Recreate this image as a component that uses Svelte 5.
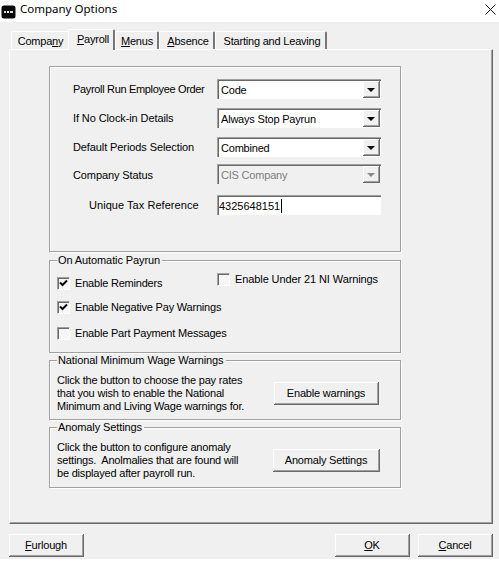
<script>
  const tabs = [
    { pre: 'Compa', key: 'n', post: 'y', w: 58, cls: 'first' },
    { pre: '', key: 'P', post: 'ayroll', w: 47, cls: 'active' },
    { pre: '', key: 'M', post: 'enus', w: 44, cls: 'menus' },
    { pre: '', key: 'A', post: 'bsence', w: 56, cls: 'absence' },
    { pre: 'Starting and Leaving', key: '', post: '', w: 112, cls: 'starting' }
  ];
  const combos = [
    { label: 'Payroll Run Employee Order', value: 'Code', cls: 'r1' },
    { label: 'If No Clock-in Details', value: 'Always Stop Payrun', cls: 'r2' },
    { label: 'Default Periods Selection', value: 'Combined', cls: 'r2' },
    { label: 'Company Status', value: 'CIS Company', cls: 'r3', disabled: true }
  ];
</script>

<div class="window">
  <header class="titlebar">
    <svg class="appicon" width="15" height="15" viewBox="0 0 15 15">
      <rect x="0.5" y="1.5" width="14" height="13" rx="2.5" fill="#0a0a0a" />
      <rect x="3" y="7" width="2" height="2" fill="#ddd" />
      <rect x="6" y="7" width="2" height="2" fill="#eee" />
      <rect x="9" y="7" width="3" height="2" fill="#ddd" />
    </svg>
    <span class="title">Company Options</span>
    <svg class="close" width="11" height="11" viewBox="0 0 11 11">
      <path d="M0.5 0.5 10.5 10.5M10.5 0.5 0.5 10.5" stroke="#111" stroke-width="1" fill="none" />
    </svg>
  </header>

  <main class="dialog">
    <nav class="tabs">
      {#each tabs as t}
        <div class="tab {t.cls}" style="width:{t.w}px">
          <span>{t.pre}{#if t.key}<u>{t.key}</u>{/if}{t.post}</span>
        </div>
      {/each}
    </nav>

    <section class="pane">
      <div class="group general">
        {#each combos as c}
          <div class="row {c.cls}">
            <span class="label">{c.label}</span>
            <div class="combo" class:disabled={c.disabled}>
              <span class="value">{c.value}</span>
              <span class="arrow"><i></i></span>
            </div>
          </div>
        {/each}
        <div class="row r4">
          <span class="label indented">Unique Tax Reference</span>
          <div class="combo text">
            <span class="value">4325648151<b class="caret"></b></span>
          </div>
        </div>
      </div>

      <div class="group payrun">
        <span class="legend">On Automatic Payrun</span>
        <div class="col">
          <label class="check c1"><span class="box on"><svg width="9" height="9" viewBox="0 0 9 9"><path d="M1 3.5 3.5 6 8 1.5" stroke="#000" stroke-width="2" fill="none" /></svg></span>Enable Reminders</label>
          <label class="check c2"><span class="box on"><svg width="9" height="9" viewBox="0 0 9 9"><path d="M1 3.5 3.5 6 8 1.5" stroke="#000" stroke-width="2" fill="none" /></svg></span>Enable Negative Pay Warnings</label>
          <label class="check c3"><span class="box"></span>Enable Part Payment Messages</label>
        </div>
        <div class="col">
          <label class="check c4"><span class="box"></span>Enable Under 21 NI Warnings</label>
        </div>
      </div>

      <div class="group info wage">
        <span class="legend">National Minimum Wage Warnings</span>
        <p>Click the button to choose the pay rates<br />that you wish to enable the National<br />Minimum and Living Wage warnings for.</p>
        <button class="btn enable">Enable warnings</button>
      </div>

      <div class="group info anomaly">
        <span class="legend">Anomaly Settings</span>
        <p>Click the button to configure anomaly<br />settings.&nbsp; Anolmalies that are found will<br />be displayed after payroll run.</p>
        <button class="btn settings">Anomaly Settings</button>
      </div>
    </section>

    <footer class="footer">
      <button class="btn foot"><u>F</u>urlough</button>
      <div class="right">
        <button class="btn foot"><u>O</u>K</button>
        <button class="btn foot"><u>C</u>ancel</button>
      </div>
    </footer>
  </main>
</div>

<style>
  :global(body) { margin: 0; background: #fff; }
  .window {
    width: 499px;
    height: 571px;
    overflow: hidden;
    background: #fff;
    font: 11px/13px "Liberation Sans", Arial, sans-serif;
    letter-spacing: -0.2px;
    color: #000;
  }
  .titlebar {
    height: 22px;
    display: flex;
    align-items: center;
    position: relative;
    padding-left: 1px;
    box-sizing: border-box;
    letter-spacing: 0;
  }
  .appicon { flex: none; margin-top: 1px; }
  .title {
    margin-left: 4px;
    font: 11.5px "Noto Sans", sans-serif;
    color: #000;
    position: relative;
    top: -3px;
  }
  .close { position: absolute; left: 485px; top: 4px; }
  .dialog {
    height: 537px;
    background: #f0f0f0;
    padding: 7px 6px 0 9px;
    box-sizing: border-box;
  }
  .tabs { display: flex; height: 20px; padding-left: 2px; align-items: flex-end; }
  .tab {
    height: 18px;
    box-sizing: border-box;
    display: flex;
    align-items: center;
    justify-content: center;
    border-top: 1px solid #fff;
    border-left: 1px solid #fff;
    border-right: 2px solid #777;
    border-radius: 2px 2px 0 0;
    padding-top: 2px;
    flex: none;
    white-space: nowrap;
  }
  .tab.first { border-right: 0; }
  .tab.active {
    height: 21px;
    margin-left: -1px;
    margin-bottom: -1px;
    position: relative;
    z-index: 1;
    background: #f0f0f0;
    padding: 0 0 1px 4px;
  }
  .tab.menus { padding-left: 1px; }
  .tab.absence, .tab.starting { padding-left: 3px; }
  .pane {
    height: 475px;
    box-sizing: border-box;
    border-top: 1px solid #fff;
    border-left: 1px solid #fff;
    border-right: 1px solid #696969;
    border-bottom: 1px solid #696969;
    box-shadow: inset -1px -1px 0 #a0a0a0;
    padding: 16px 0 0 39px;
  }
  .group {
    width: 352px;
    box-sizing: border-box;
    border: 1px solid #a0a0a0;
    box-shadow: inset 1px 1px 0 #fff, 1px 1px 0 #fff;
    position: relative;
  }
  .general { height: 186px; padding-top: 12px; }
  .payrun { height: 93px; margin-top: 8px; display: flex; padding-left: 7px; }
  .info { height: 60px; margin-top: 7px; display: flex; padding-left: 7px; }
  .anomaly { height: 61px; margin-top: 7px; }
  .legend {
    position: absolute;
    left: 7px;
    top: -7px;
    background: #f0f0f0;
    padding: 0 2px 0 1px;
    white-space: nowrap;
    letter-spacing: -0.1px;
  }
  .row { display: flex; align-items: center; height: 20px; }
  .r2 { margin-top: 9px; }
  .r3 { margin-top: 7px; }
  .r3 .label { padding-top: 3px; }
  .r4 { margin-top: 11px; }
  .label { width: 144px; padding-left: 23px; flex: none; white-space: nowrap; letter-spacing: -0.1px; }
  .r1 .label { letter-spacing: -0.33px; }
  .label.indented { padding-left: 39px; width: 128px; letter-spacing: 0.05px; }
  .combo {
    width: 164px;
    height: 20px;
    box-sizing: border-box;
    flex: none;
    background: #fff;
    border-top: 1px solid #a0a0a0;
    border-left: 1px solid #a0a0a0;
    box-shadow: inset 1px 1px 0 #696969;
    display: flex;
    align-items: center;
    padding-left: 3px;
    position: relative;
  }
  .value { flex: 1; white-space: nowrap; padding-top: 1px; }
  .combo.disabled { background: #f0f0f0; color: #7d7d7d; }
  .combo.text { padding-left: 1px; letter-spacing: 0; }
  .caret {
    display: inline-block;
    width: 1px;
    height: 14px;
    background: #000;
    vertical-align: -3px;
    margin-left: 1px;
  }
  .arrow {
    width: 17px;
    height: 17px;
    box-sizing: border-box;
    flex: none;
    margin-right: 1px;
    background: #f0f0f0;
    border-right: 1px solid #696969;
    border-bottom: 1px solid #696969;
    box-shadow: inset 1px 1px 0 #fff, inset -1px -1px 0 #a0a0a0;
    display: flex;
    align-items: center;
    justify-content: center;
  }
  .arrow i {
    width: 0;
    height: 0;
    border-left: 4px solid transparent;
    border-right: 4px solid transparent;
    border-top: 4px solid #000;
    margin-top: 1px;
  }
  .disabled .arrow i { border-top-color: #8a8a8a; }
  .col { width: 160px; flex: none; }
  .check { display: flex; align-items: center; white-space: nowrap; height: 13px; }
  .box {
    width: 13px;
    height: 13px;
    box-sizing: border-box;
    flex: none;
    margin-right: 5px;
    background: #f6f6f6;
    border-top: 1px solid #a0a0a0;
    border-left: 1px solid #a0a0a0;
    border-right: 1px solid #fff;
    border-bottom: 1px solid #fff;
    box-shadow: inset 1px 1px 0 #696969;
    display: flex;
    align-items: center;
    justify-content: center;
  }
  .c1 { margin-top: 16px; }
  .c2 { margin-top: 11px; }
  .c3 { margin-top: 13px; }
  .c4 { margin-top: 12px; letter-spacing: -0.1px; }
  .info p { margin: 13px 0 0; width: 217px; flex: none; white-space: nowrap; }
  .anomaly p { width: 216px; }
  .btn {
    font: inherit;
    letter-spacing: inherit;
    color: #000;
    background: #f0f0f0;
    box-sizing: border-box;
    height: 23px;
    padding: 0;
    border: 0;
    border-right: 1px solid #696969;
    border-bottom: 1px solid #696969;
    box-shadow: inset 1px 1px 0 #fff, inset -1px -1px 0 #a0a0a0;
    flex: none;
  }
  .enable { width: 105px; margin-top: 21px; }
  .settings { width: 107px; margin-top: 21px; }
  .footer { display: flex; justify-content: space-between; margin-top: 10px; }
  .right { display: flex; gap: 8px; }
  .foot { width: 75px; }
</style>
